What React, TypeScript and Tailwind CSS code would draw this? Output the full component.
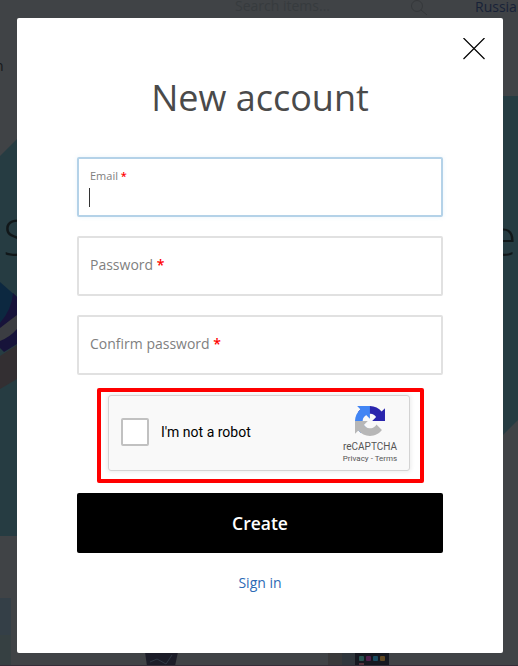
import React from "react";

function Backdrop() {
  return (
    <div className="absolute inset-0 overflow-hidden bg-[#404346]" aria-hidden="true">
      <svg className="absolute inset-0" width="518" height="666" viewBox="0 0 518 666">
        <path d="M0 156L60 96H518V420L402 536H0Z" fill="#263c42" />
        <path d="M0 282L17 297V320L0 340Z" fill="#0c2840" />
        <path d="M0 323Q12 309 13 293L17 297V344L4 352L0 348Z" fill="#17133a" />
        <path d="M0 328Q9 321 17 315V329Q10 337 0 341Z" fill="#3b3d42" />
        <path d="M0 356L17 345V379L0 389Z" fill="#332f32" />
        <rect x="0" y="598" width="11" height="68" fill="#343f47" />
        <path d="M0 635H11V666H0Z" fill="#364042" />
        <path d="M145 652H178L175 666H147Z" fill="#1c1d28" />
        <path d="M150 662L157 659L166 664L172 655" fill="none" stroke="#303844" />
        <rect x="328" y="652" width="14" height="14" fill="#39393a" />
        <rect x="342" y="652" width="13" height="14" fill="#30363c" />
        <rect x="355" y="652" width="34" height="14" rx="1" fill="#161820" />
        <rect x="359" y="656" width="5" height="5" rx="1" fill="#285451" />
        <rect x="366" y="656" width="5" height="5" rx="1" fill="#51204d" />
        <rect x="373" y="656" width="5" height="5" rx="1" fill="#1c4c61" />
        <rect x="380" y="656" width="5" height="5" rx="1" fill="#624923" />
        <rect x="359" y="663" width="5" height="3" fill="#54303b" />
        <circle cx="417" cy="6" r="5.5" fill="none" stroke="#35383b" />
        <path d="M421 10L427 15" stroke="#35383b" />
        <path d="M0 665.5H518" stroke="#352c38" />
      </svg>
      <span className="absolute top-[-4px] left-[235px] text-sm leading-5 text-[#373b3e]">Search items...</span>
      <span className="absolute top-[-3px] left-[475px] text-sm leading-5 text-[#182238]">Russian</span>
      <span className="absolute top-[56px] left-[-5px] text-sm leading-5 text-[#151719]">n</span>
      <span className="absolute top-[203px] left-[3px] text-[50px] leading-[68px] font-light text-[#111719]">S</span>
      <span className="absolute top-[203px] left-[489px] text-[50px] leading-[68px] font-light text-[#111719]">e</span>
    </div>
  );
}

function Required() {
  return <span className="font-semibold text-[#ff0000]"> *</span>;
}

function Field({ label }: { label: string }) {
  return (
    <div className="flex h-[60px] items-center rounded-xs border-2 border-[#e1e1e1] px-[11px] pb-[3px] text-sm text-[#808080]">
      <label className="whitespace-pre">{label}<Required /></label>
    </div>
  );
}

function Captcha() {
  return (
    <div className="mx-5 mt-[13px] h-[95px] w-[327px] rounded-xs border-4 border-[#ff0000] pt-[3px] pl-[7px]">
      <div className="flex h-[76px] w-[302px] items-center rounded-[3px] border border-[#d3d3d3] bg-[#f9f9f9] pl-3 font-[Roboto,sans-serif] shadow-[0_0_4px_1px_rgba(0,0,0,0.08)]">
        <span className="mb-0.5 h-7 w-7 rounded-xs border-2 border-[#c1c1c1] bg-white" />
        <span className="mb-0.5 ml-3 w-[180px] text-sm text-black">I'm not a robot</span>
        <div className="flex w-[58px] flex-col items-center pt-[5px]">
          <svg width="30" height="30" viewBox="0 0 64 64">
            <path fill="#2a25ad" d="M64 31.955l-.033-1.37V4.687l-7.16 7.16C50.948 4.674 42.033.093 32.05.093c-10.4 0-19.622 4.96-25.458 12.64l11.736 11.86a15.55 15.55 0 0 1 4.754-5.334c2.05-1.6 4.952-2.906 8.968-2.906.485 0 .86.057 1.135.163 4.976.393 9.288 3.14 11.828 7.124l-8.307 8.307L64 31.953" />
            <path fill="#4285f4" d="M31.862.094l-1.37.033H4.594l7.16 7.16C4.58 13.147 0 22.06 0 32.046c0 10.4 4.96 19.622 12.64 25.458L24.5 45.768a15.55 15.55 0 0 1-5.334-4.754c-1.6-2.05-2.906-4.952-2.906-8.968 0-.485.057-.86.163-1.135.393-4.976 3.14-9.288 7.124-11.828l8.307 8.307L31.86.095" />
            <path fill="#b7b7b7" d="M.001 32.045l.033 1.37v25.898l7.16-7.16c5.86 7.173 14.774 11.754 24.76 11.754 10.4 0 19.622-4.96 25.458-12.64l-11.736-11.86a15.55 15.55 0 0 1-4.754 5.334c-2.05 1.6-4.952 2.906-8.968 2.906-.485 0-.86-.057-1.135-.163-4.976-.393-9.288-3.14-11.828-7.124l8.307-8.307c-10.522.04-22.4.066-31.295-.005" />
          </svg>
          <span className="mt-[5px] text-[10px] leading-3 text-[#555]">reCAPTCHA</span>
          <span className="text-[8px] leading-[12px] whitespace-nowrap text-[#555]">Privacy - Terms</span>
        </div>
      </div>
    </div>
  );
}

export default function App() {
  return (
    <div className="relative h-[666px] w-[518px] overflow-hidden px-[17px] pt-[18px] font-['Open_Sans',sans-serif]">
      <Backdrop />
      <main className="relative flex h-[635px] w-[486px] flex-col rounded-xs bg-white px-[60px]">
        <button className="mt-5 -mr-[42px] flex h-[22px] w-[22px] self-end" aria-label="Close">
          <svg width="22" height="22" viewBox="0 0 22 22" fill="none" stroke="#000" strokeWidth="1.2">
            <path d="M.5 0L21.5 21M21.5 0L.5 21" />
          </svg>
        </button>
        <h1 className="mt-3 text-center text-[36px] leading-[52px] text-[#4a4a4a]">New account</h1>
        <div className="mt-[33px] h-[60px] rounded-xs border-2 border-[#b4d2e8] px-[10px] pt-[9px] shadow-[0_0_4px_rgba(100,170,220,0.15)]">
          <label className="block pl-px text-[11px] leading-4 text-[#808080]">Email<Required /></label>
          <div className="mt-1 h-[19px] w-px bg-[#333]" />
        </div>
        <div className="mt-[19px]"><Field label="Password" /></div>
        <div className="mt-[19px]"><Field label="Confirm password" /></div>
        <Captcha />
        <button className="mt-[10px] h-[60px] rounded-xs bg-black text-[17.5px] font-semibold text-white">Create</button>
        <a className="mt-5 self-center text-sm leading-5 text-[#2c69b5]">Sign in</a>
      </main>
    </div>
  );
}
